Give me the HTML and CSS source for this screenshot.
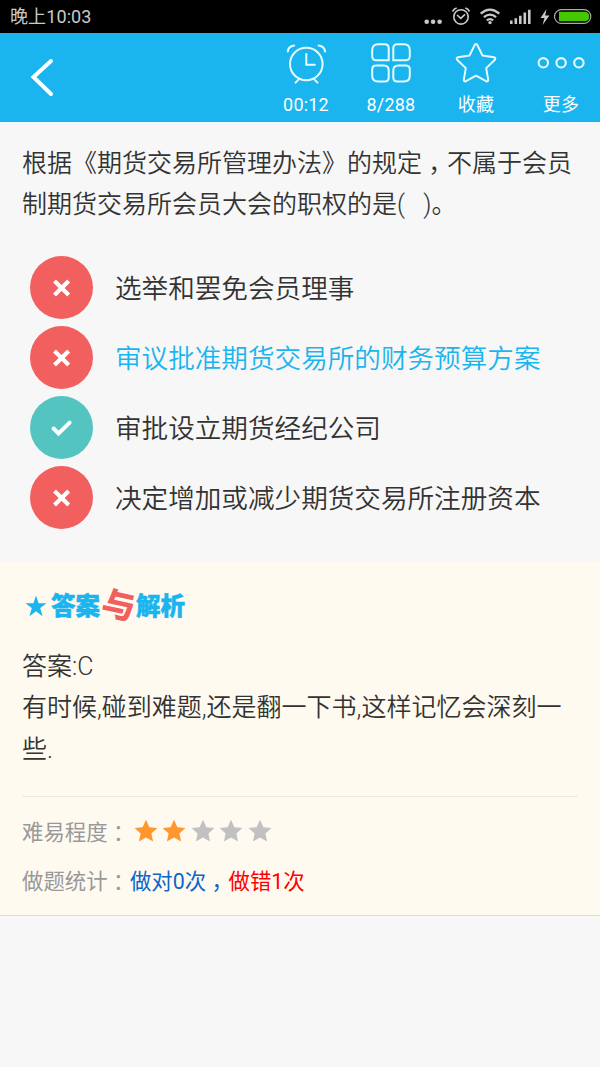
FILE: index.html
```html
<!DOCTYPE html>
<html lang="zh-CN">
<head>
<meta charset="utf-8">
<title>答题</title>
<link rel="stylesheet" href="styles.css">
</head>
<body>
<svg width="0" height="0" class="defs">
  <symbol id="cross" viewBox="0 0 64 64"><path d="M26.4 26.9l11.4 11.2M37.8 26.9l-11.4 11.2" fill="none" stroke="#fff" stroke-width="4.2" stroke-linecap="square"/></symbol>
  <symbol id="star" viewBox="0 0 24 24"><path d="M12 .8l3.4 7.4 8 .9-6 5.4 1.7 8-7.1-4-7.1 4 1.7-8-6-5.4 8-.9z"/></symbol>
</svg>
<div class="status">
  <span class="time">晚上10:03</span>
  <svg class="status-icons" width="180" height="33" viewBox="420 0 180 33">
    <g fill="#c9c9c9"><circle cx="426.7" cy="21.8" r="2.3"/><circle cx="433.1" cy="21.8" r="2.3"/><circle cx="439.6" cy="21.8" r="2.3"/></g>
    <g fill="none" stroke="#c9c9c9" stroke-width="1.6"><circle cx="461" cy="16.9" r="7.2"/><path d="M457 15l3.8 3.3 4.2-4M452.5 11.5q1.5-2.8 4.2-3.5M469.5 11.5q-1.5-2.8-4.2-3.5"/></g>
    <g fill="none" stroke="#c9c9c9" stroke-width="2.3"><path d="M480.7 13.6q9.3-8 18.6 0M483.9 17.2q6.1-5.2 12.2 0M486.8 20.4q3.2-2.5 6.4 0"/></g>
    <circle cx="490" cy="22.6" r="1.7" fill="#c9c9c9"/>
    <path d="M510 20.5h2.6V24H510zM514.5 18.3h2.6V24h-2.6zM519 15.7h2.6V24H519zM523.5 12.6h2.6V24h-2.6zM528 9.8h2.6V24H528z" fill="#c9c9c9"/>
    <path d="M546.5 9l-6 9h4l-2 7 7-9.5h-4.3z" fill="#c9c9c9"/>
    <rect x="554.5" y="9.6" width="36.3" height="13.8" rx="6.9" fill="#000" stroke="#aaa" stroke-width="1.2"/>
    <path d="M559 11.7h25q5.3 0 5.3 4.8t-5.3 4.8h-25z" fill="#46c800"/>
  </svg>
</div>
<header class="bar">
  <svg class="back" width="85" height="88" viewBox="0 0 85 88"><path d="M51 28L33.5 44 51 61" fill="none" stroke="#fff" stroke-width="4" stroke-linecap="round"/></svg>
  <nav class="tools">
    <div class="tool">
      <svg width="44" height="44" viewBox="0 0 44 44" fill="none" stroke="#e6fbff" stroke-width="2" stroke-linecap="round"><circle cx="22.3" cy="24" r="16.3"/><path d="M22.3 14v10.7h8.5M14.5 39.6l-3 3M30.5 39.6l3 3M3.8 11.5q.3-5 6.4-6M41 11.5q-.3-5-6.4-6"/></svg>
      <span>00:12</span>
    </div>
    <div class="tool">
      <svg width="44" height="44" viewBox="0 0 44 44" fill="none" stroke="#e6fbff" stroke-width="2"><path d="M9.2 4.2h6.5q4 0 4 4v12H7.2q-4 0-4-4v-6q0-6 6-6zM34.8 4.2h-6.5q-4 0-4 4v12h12.5q4 0 4-4v-6q0-6-6-6zM9.2 41.6h6.5q4 0 4-4v-7q0-5-5-5H7.2q-4 0-4 4v6q0 6 6 6zM34.8 41.6h-6.5q-4 0-4-4v-7q0-5 5-5h7.5q4 0 4 4v6q0 6-6 6z"/></svg>
      <span>8/288</span>
    </div>
    <div class="tool">
      <svg width="44" height="44" viewBox="0 0 44 44" fill="none" stroke="#e6fbff" stroke-width="2" stroke-linejoin="round"><path d="M20.7 5q1.3-2 2.6 0l5.2 10.5 11.6 1.7q2 .7.8 2.5l-8.7 8.4 2 11.7q0 2.2-2.2 1.4L22 35.7l-10 5.5q-2.2.8-2.2-1.4l2-11.7-8.7-8.4q-1.2-1.8.8-2.5l11.6-1.7z"/></svg>
      <span>收藏</span>
    </div>
    <div class="tool more">
      <svg width="50" height="44" viewBox="0 0 50 44" fill="none" stroke="#e6fbff" stroke-width="2.1"><circle cx="7.3" cy="22.8" r="4.7"/><circle cx="25.1" cy="22.8" r="4.7"/><circle cx="42.9" cy="22.8" r="4.7"/></svg>
      <span>更多</span>
    </div>
  </nav>
</header>
<main>
  <p class="question">根据《期货交易所管理办法》的规定<span class="mid">，</span>不属于会员制期货交易所会员大会的职权的是(&nbsp; &nbsp;)。</p>
  <ul class="options">
    <li><svg class="mark wrong"><use href="#cross"/></svg><span>选举和罢免会员理事</span></li>
    <li class="picked"><svg class="mark wrong"><use href="#cross"/></svg><span>审议批准期货交易所的财务预算方案</span></li>
    <li><svg class="mark right" viewBox="0 0 64 64"><path d="M24 33l5 5L40.3 27" fill="none" stroke="#fff" stroke-width="4" stroke-linecap="round"/></svg><span>审批设立期货经纪公司</span></li>
    <li><svg class="mark wrong"><use href="#cross"/></svg><span>决定增加或减少期货交易所注册资本</span></li>
  </ul>
</main>
<section class="answer">
  <h2 class="title"><svg width="22" height="22" viewBox="0 0 22 22"><path d="M11 .5l2.6 7.7h8l-6.4 4.9 2.4 8.2-6.6-5-6.6 5 2.4-8.2L.4 8.2h8z" fill="#1ab4ee"/></svg><span class="word">答案</span><span class="and">与</span><span class="word">解析</span></h2>
  <p class="explain">答案:C<br>有时候,碰到难题,还是翻一下书,这样记忆会深刻一些.</p>
  <div class="stats">
    <div class="row"><span>难易程度<span class="mid">：</span></span>
      <span class="stars"><svg class="on"><use href="#star"/></svg><svg class="on"><use href="#star"/></svg><svg><use href="#star"/></svg><svg><use href="#star"/></svg><svg><use href="#star"/></svg></span></div>
    <div class="row"><span>做题统计<span class="mid">：</span></span><span class="ok">做对0次<span class="mid">，</span></span><span class="bad">做错1次</span></div>
  </div>
</section>
</body>
</html>
```
FILE: styles.css
```css
* { box-sizing: border-box; }
body {
  margin: 0;
  min-height: 1067px;
  background: #f7f7f7;
  color: #333;
  font-family: Roboto, "Noto Sans CJK SC", sans-serif;
  font-weight: 350;
}
p, ul, h2 { margin: 0; padding: 0; }
svg { display: block; flex: none; }
.defs { position: absolute; }
/* full-width punctuation centred in its cell */
.mid {
  display: inline-block;
  width: 1em;
  text-align: center;
  font-feature-settings: "halt";
}

.status {
  display: flex;
  justify-content: space-between;
  height: 33px;
  padding-left: 10px;
  background: #000;
  color: #c9c9c9;
}
.time { font-size: 18px; line-height: 34px; font-weight: 400; letter-spacing: .1px; }

.bar {
  display: flex;
  justify-content: space-between;
  height: 89px;
  background: #1ab4ee;
  color: #fff;
}
.tools { display: flex; margin-right: -3.5px; }
.tool {
  display: flex;
  flex-direction: column;
  align-items: center;
  width: 85px;
  padding-top: 7px;
  font-size: 18px;
  font-weight: 400;
  line-height: 26px;
}
.tool span { margin-top: 8px; letter-spacing: .2px; }

.question { padding: 21px 22px 0; font-size: 25px; line-height: 41px; height: 130px; }
.options { list-style: none; height: 310px; }
.options li {
  display: flex;
  align-items: center;
  gap: 22px;
  height: 70px;
  padding-left: 30px;
  font-size: 26.6px;
}
.options span { padding-bottom: 2px; }
.options .picked { color: #1ab4ee; }
.mark { width: 63px; height: 63px; border-radius: 50%; }
.wrong { background: #f25f5f; }
.right { background: #54c4c0; }

.answer {
  height: 354px;
  padding: 25px 22px 0;
  background: #fffaf0;
  border-bottom: 1px solid #dedbd5;
}
.title { display: flex; align-items: center; height: 38px; padding-left: 3px; }
.word {
  margin-left: 4px;
  padding-top: 2px;
  color: #1ab4ee;
  font-size: 24.5px;
  font-weight: 900;
  line-height: 38px;
  -webkit-text-stroke: .5px #1ab4ee;
}
.and {
  width: 32px;
  margin-left: 2px;
  margin-right: -2px;
  color: #f25f5f;
  font-size: 33px;
  font-weight: 900;
  line-height: 38px;
  transform: rotate(12deg);
}
.explain { padding-top: 21px; font-size: 25px; line-height: 41.3px; }
.stats {
  margin-top: 26px;
  padding-top: 10px;
  border-top: 1px solid #eeeae1;
  color: #999;
  font-size: 21.4px;
  font-weight: 400;
}
.row { display: flex; align-items: center; height: 49px; }
.row > span:not(.stars) { padding-bottom: 2px; }
.stars { display: flex; gap: 4.4px; margin-left: 5px; }
.stars svg { width: 24px; height: 24px; fill: #c1c1c1; }
.stars .on { fill: #ff972e; }
.ok { color: #0a66c8; margin-left: 1px; }
.bad { color: #f00; margin-left: 1px; }
```
